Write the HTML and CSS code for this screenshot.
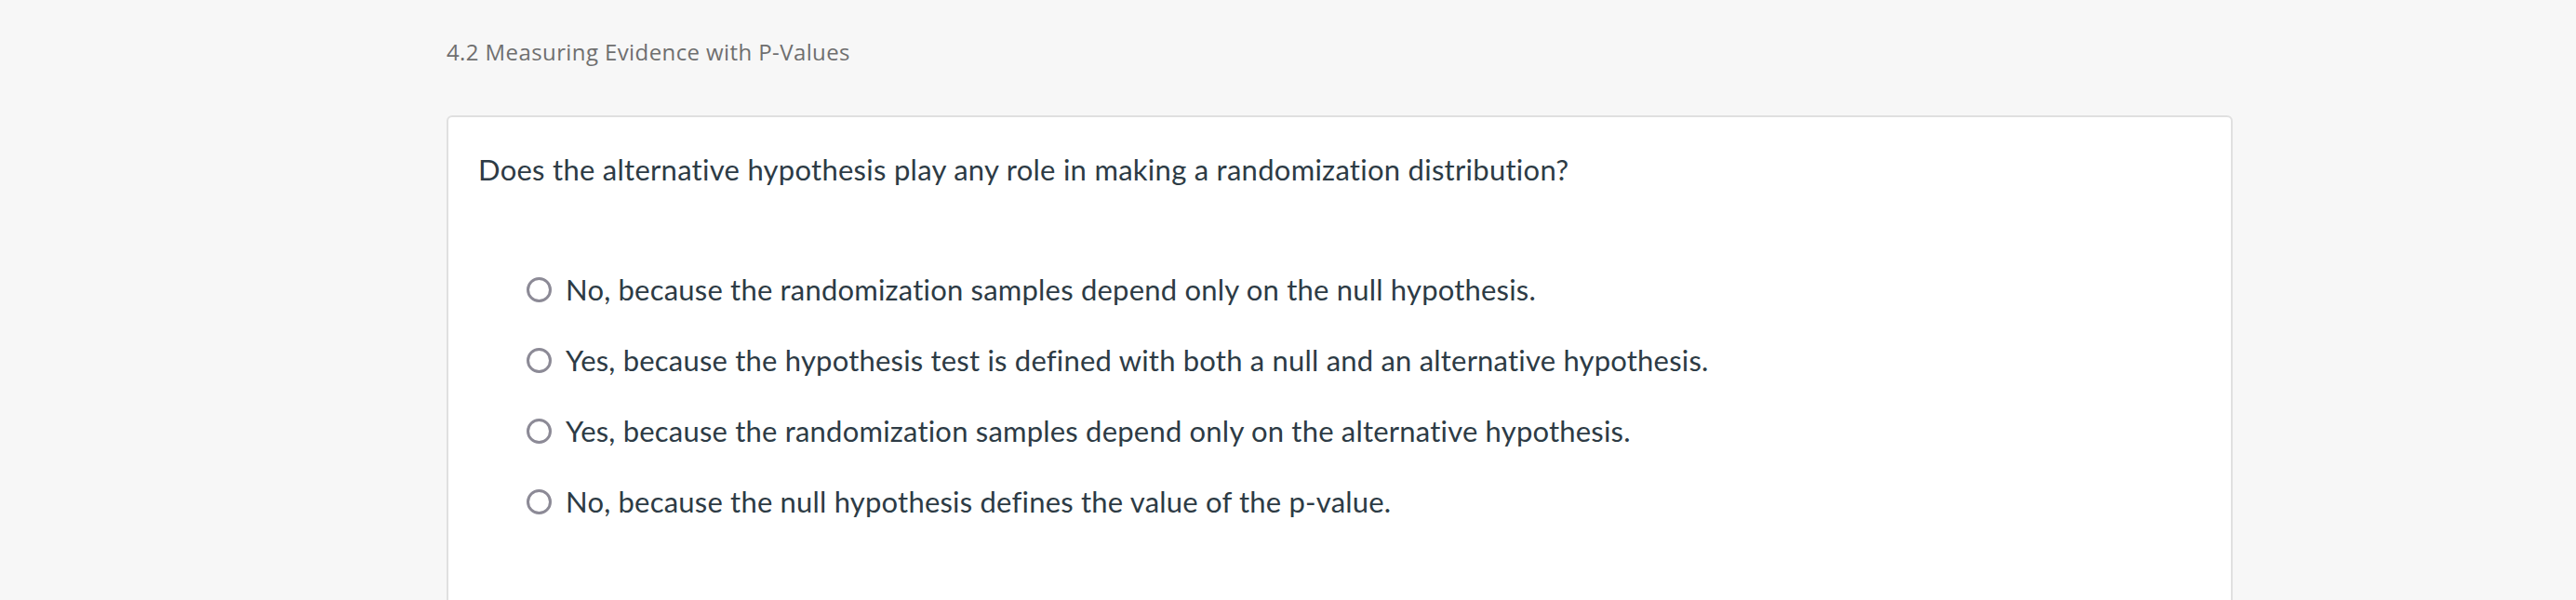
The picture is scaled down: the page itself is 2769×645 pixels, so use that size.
FILE: index.html
```
<!DOCTYPE html>
<html lang="en">
<head>
<meta charset="utf-8">
<title>4.2 Measuring Evidence with P-Values</title>
<link rel="stylesheet" href="styles.css">
</head>
<body>
<main class="page">
  <h1 class="title">4.2 Measuring Evidence with P-Values</h1>
  <section class="card">
    <p class="question">Does the alternative hypothesis play any role in making a randomization distribution?</p>
    <ul class="answers">
      <li class="answer"><span class="radio"></span><span class="label">No, because the randomization samples depend only on the null hypothesis.</span></li>
      <li class="answer"><span class="radio"></span><span class="label">Yes, because the hypothesis test is defined with both a null and an alternative hypothesis.</span></li>
      <li class="answer"><span class="radio"></span><span class="label">Yes, because the randomization samples depend only on the alternative hypothesis.</span></li>
      <li class="answer"><span class="radio"></span><span class="label">No, because the null hypothesis defines the value of the p-value.</span></li>
    </ul>
  </section>
</main>
</body>
</html>
```
FILE: styles.css
```
html, body {
  margin: 0;
  padding: 0;
  background: #f7f7f7;
}
body {
  font-family: "Lato", "Liberation Sans", sans-serif;
  overflow: hidden;
}
.page {
  padding: 40px 0 0 480px;
}
.title {
  margin: 0;
  font-family: "Open Sans", "Liberation Sans", sans-serif;
  font-weight: 400;
  font-size: 24px;
  line-height: 32px;
  letter-spacing: 0.4px;
  color: #6f6f6f;
}
.card {
  margin-top: 52px;
  width: 1920px;
  box-sizing: border-box;
  background: #ffffff;
  border: 2px solid #e0e0e0;
  border-radius: 6px;
  padding: 38px 32px 140px 32px;
}
.question {
  margin: 0;
  font-size: 31px;
  line-height: 36px;
  letter-spacing: 0.27px;
  color: #2d3b45;
}
.answers {
  list-style: none;
  margin: 73px 0 0 0;
  padding: 0 0 0 52px;
}
.answer {
  display: flex;
  align-items: center;
  gap: 15px;
  padding: 20px 0;
}
.radio {
  flex: none;
  width: 27px;
  height: 27px;
  box-sizing: border-box;
  border: 3px solid #8c8a96;
  border-radius: 50%;
  background: #ffffff;
}
.label {
  font-size: 31px;
  line-height: 36px;
  letter-spacing: 0.2px;
  color: #2d3b45;
}
```
